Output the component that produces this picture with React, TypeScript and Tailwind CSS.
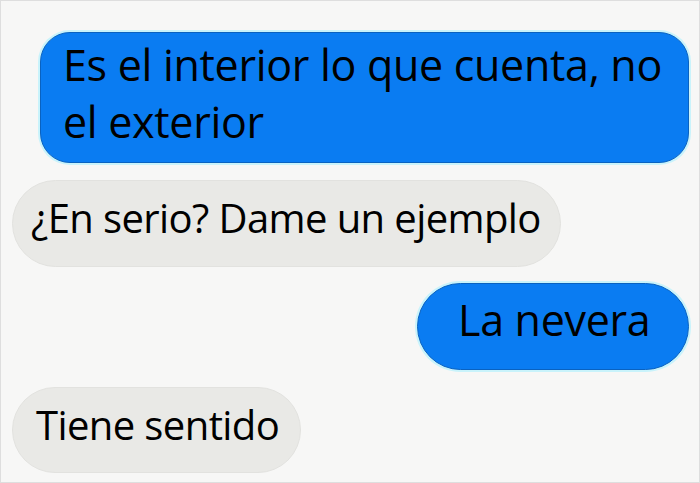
import React from "react";

const font = { fontFamily: '"Open Sans", "Noto Sans", sans-serif' };

export default function App() {
  return (
    <div
      className="w-[700px] h-[483px] bg-[#f7f7f6] border border-[#dedede] flex flex-col text-black overflow-hidden"
      style={font}
    >
      <div className="flex justify-end pt-[31px] pr-[10px]">
        <div className="w-[649px] h-[131px] rounded-[30px] bg-[#0a7cf2] border border-[#0a62c0] shadow-[0_0_0_2px_#c9f3fb] pl-[22px] pt-[3px] text-[43px] leading-[57px] tracking-[-0.3px]">
          Es el interior lo que cuenta, no
          <br />
          el exterior
        </div>
      </div>
      <div className="flex justify-start pt-[17px] pl-[11px]">
        <div className="w-[549px] h-[87px] rounded-full bg-[#e9e9e6] border border-[#e2e2df] pl-[18px] pt-[8px] text-[40px] leading-[57px] tracking-[-0.6px]">
          ¿En serio? Dame un ejemplo
        </div>
      </div>
      <div className="flex justify-end pt-[16px] pr-[10px]">
        <div className="w-[272px] h-[87px] rounded-full bg-[#0a7cf2] border border-[#0a62c0] shadow-[0_0_0_2px_#c9f3fb] pl-[40px] pt-[7px] text-[43px] leading-[57px] tracking-[-0.3px]">
          La nevera
        </div>
      </div>
      <div className="flex justify-start pt-[17px] pl-[11px]">
        <div className="w-[289px] h-[86px] rounded-full bg-[#e9e9e6] border border-[#e2e2df] pl-[23px] pt-[8px] text-[40px] leading-[57px] tracking-[-0.6px]">
          Tiene sentido
        </div>
      </div>
    </div>
  );
}
